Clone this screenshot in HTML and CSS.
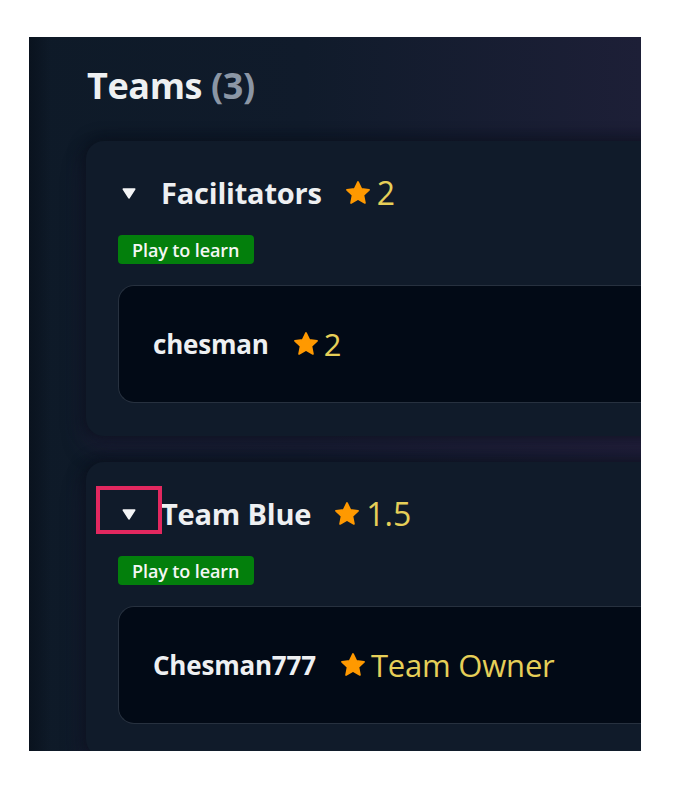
FILE: index.html
```html
<!DOCTYPE html>
<html lang="en">
<head>
<meta charset="utf-8">
<title>Teams</title>
<link rel="stylesheet" href="styles.css">
</head>
<body>
<section class="panel">
  <h2 class="panel-title">Teams <span class="count">(3)</span></h2>
  <div class="team-list">
    <article class="team-card">
      <div class="team-head">
        <span class="caret"><svg viewBox="0 0 14 11" width="14" height="11"><path d="M1.2 1 H12.8 L7 10 Z" fill="#f4f5f6" stroke="#f4f5f6" stroke-width="1.4" stroke-linejoin="round"/></svg></span>
        <span class="team-name">Facilitators</span>
        <span class="rating"><svg class="star" viewBox="0 0 24 24"><polygon points="12,1.8 15.1,8.2 22.2,9.1 17,14 18.4,21.2 12,17.6 5.6,21.2 7,14 1.8,9.1 8.9,8.2" fill="#ff9900" stroke="#ff9900" stroke-width="1.6" stroke-linejoin="round"/></svg><span class="rating-val">2</span></span>
      </div>
      <span class="badge">Play to learn</span>
      <div class="member">
        <span class="member-name">chesman</span>
        <span class="rating small"><svg class="star" viewBox="0 0 24 24"><polygon points="12,1.8 15.1,8.2 22.2,9.1 17,14 18.4,21.2 12,17.6 5.6,21.2 7,14 1.8,9.1 8.9,8.2" fill="#ff9900" stroke="#ff9900" stroke-width="1.6" stroke-linejoin="round"/></svg><span class="rating-val">2</span></span>
      </div>
    </article>
    <article class="team-card">
      <div class="team-head">
        <span class="caret highlighted"><svg viewBox="0 0 14 11" width="14" height="11"><path d="M1.2 1 H12.8 L7 10 Z" fill="#f4f5f6" stroke="#f4f5f6" stroke-width="1.4" stroke-linejoin="round"/></svg></span>
        <span class="team-name">Team Blue</span>
        <span class="rating"><svg class="star" viewBox="0 0 24 24"><polygon points="12,1.8 15.1,8.2 22.2,9.1 17,14 18.4,21.2 12,17.6 5.6,21.2 7,14 1.8,9.1 8.9,8.2" fill="#ff9900" stroke="#ff9900" stroke-width="1.6" stroke-linejoin="round"/></svg><span class="rating-val">1.5</span></span>
      </div>
      <span class="badge">Play to learn</span>
      <div class="member">
        <span class="member-name">Chesman777</span>
        <span class="rating small"><svg class="star" viewBox="0 0 24 24"><polygon points="12,1.8 15.1,8.2 22.2,9.1 17,14 18.4,21.2 12,17.6 5.6,21.2 7,14 1.8,9.1 8.9,8.2" fill="#ff9900" stroke="#ff9900" stroke-width="1.6" stroke-linejoin="round"/></svg><span class="rating-val owner">Team Owner</span></span>
      </div>
    </article>
  </div>
</section>
</body>
</html>
```

FILE: styles.css
```css
html, body {
  margin: 0;
  padding: 0;
  background: #ffffff;
}

body {
  font-family: "Open Sans", "Noto Sans", sans-serif;
  color: #eef0f2;
}

.panel {
  margin: 37px 0 0 29px;
  width: 612px;
  height: 714px;
  box-sizing: border-box;
  padding: 25px 0 0 57px;
  overflow: hidden;
  background:
    linear-gradient(90deg, rgba(6, 12, 22, 0.55) 0px, rgba(6, 12, 22, 0) 22px),
    linear-gradient(90deg, #0e1a28 0%, #101b2b 45%, #1d1f37 100%);
}

.panel-title {
  margin: 0 0 32px 1px;
  font-size: 36px;
  font-weight: 700;
  line-height: 47px;
  letter-spacing: -0.4px;
  color: #eef0f2;
}

.count {
  color: #8b96a5;
}

.team-list {
  display: flex;
  flex-direction: column;
  gap: 26px;
}

.team-card {
  width: 620px;
  box-sizing: border-box;
  padding: 33px 0 33px 32px;
  border-radius: 18px;
  background: #101b2a;
  box-shadow: 0 0 14px 4px rgba(4, 9, 18, 0.55), 0 14px 22px 2px rgba(52, 38, 78, 0.35);
  display: flex;
  flex-direction: column;
  align-items: flex-start;
}

.team-head {
  display: flex;
  align-items: center;
  height: 38px;
}

.caret {
  position: relative;
  display: flex;
  align-items: center;
  justify-content: center;
  width: 14px;
  height: 14px;
  margin: 0 25px 0 4px;
}

.caret svg {
  display: block;
}

.caret.highlighted::after {
  content: "";
  position: absolute;
  left: -26px;
  top: -21px;
  width: 58px;
  height: 40px;
  border: 4px solid #e3285f;
}

.team-name {
  font-size: 29px;
  font-weight: 700;
  line-height: 38px;
  letter-spacing: -0.2px;
  color: #eef0f2;
}

.rating {
  display: flex;
  align-items: center;
  margin-left: 23px;
  gap: 6px;
}

.star {
  width: 26px;
  height: 26px;
  display: block;
}

.rating-val {
  font-size: 32px;
  font-weight: 500;
  line-height: 38px;
  color: #e6cf58;
}

.badge {
  margin-top: 23px;
  height: 29px;
  box-sizing: border-box;
  padding: 0 15px 0 14px;
  display: flex;
  align-items: center;
  border-radius: 4px;
  background: #037f0c;
  color: #f4f7f4;
  font-size: 18px;
  font-weight: 600;
  letter-spacing: -0.1px;
}

.member {
  margin-top: 21px;
  width: 100%;
  height: 118px;
  box-sizing: border-box;
  padding-left: 34px;
  display: flex;
  align-items: center;
  border: 1px solid #27313f;
  border-right: none;
  border-radius: 16px 0 0 16px;
  background: #020a16;
}

.member-name {
  font-size: 26px;
  font-weight: 700;
  letter-spacing: -0.2px;
  color: #eef0f2;
}

.rating.small {
  margin-left: 24px;
  gap: 5px;
}

.rating.small .rating-val {
  font-size: 31px;
}

.rating-val.owner {
  letter-spacing: -0.2px;
}
```
